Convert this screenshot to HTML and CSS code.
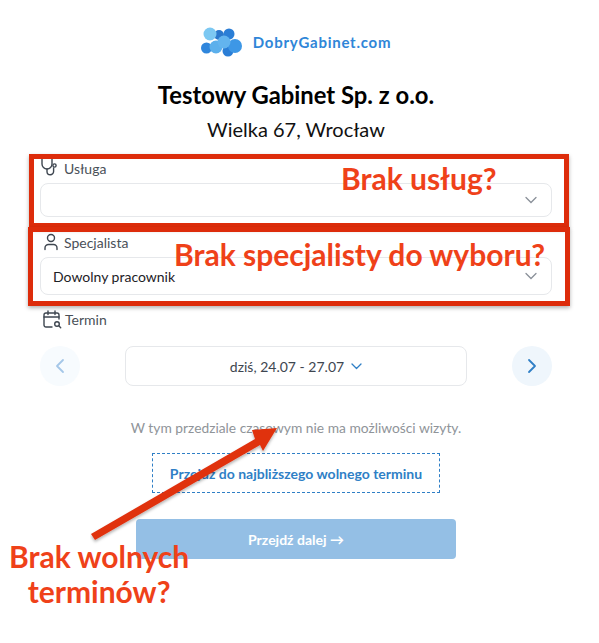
FILE: index.html
```html
<!DOCTYPE html>
<html lang="pl">
<head>
  <meta charset="UTF-8" />
  <title>DobryGabinet.com</title>
  <link rel="stylesheet" href="styles.css">
</head>
<body>
  <div class="page">

    <div class="logo">
      <svg class="logo-mark" width="41" height="30" viewBox="0 0 41 30">
        <circle cx="18" cy="8" r="5" fill="#2b78cc"/>
        <circle cx="28" cy="7" r="5.500" fill="#2b7ed6"/>
        <circle cx="9" cy="7" r="6.500" fill="#7cc8f2"/>
        <circle cx="5.500" cy="21" r="5.500" fill="#2f86dc"/>
        <circle cx="27" cy="24" r="5.500" fill="#2b7ed6"/>
        <circle cx="34" cy="19" r="7" fill="#3d97e6"/>
        <circle cx="15" cy="20" r="6.500" fill="#5cb0ec"/>
        <circle cx="23" cy="15" r="6.500" fill="#63b4ee"/>
      </svg>
      <span class="logo-text">DobryGabinet.com</span>
    </div>

    <h1>Testowy Gabinet Sp. z o.o.</h1>
    <p class="address">Wielka 67, Wrocław</p>

    <div class="field field-service">
      <div class="field-label">
        <svg class="icon-stetho" width="20" height="20" viewBox="0 0 20 20" fill="none" stroke="#3e4650" stroke-width="1.400" stroke-linecap="round">
          <path d="M2 0v6a5 5 0 0 0 10 0V0"/>
          <path d="M7 11v2.500a3.300 3.300 0 0 0 6.600 0v-3.500"/>
          <circle cx="14.500" cy="7.500" r="1.600"/>
        </svg>
        <span>Usługa</span>
      </div>
      <div class="select select-empty">
        <span></span>
        <svg class="chevron" width="12" height="8" viewBox="0 0 12 8" fill="none" stroke="#8a9099" stroke-width="1.300" stroke-linecap="round"><path d="M1 1.500l5 5 5-5"/></svg>
      </div>
    </div>

    <div class="field field-person">
      <div class="field-label">
        <svg width="16" height="18" viewBox="0 0 16 18" fill="none" stroke="#3e4650" stroke-width="1.400" stroke-linecap="round">
          <circle cx="8" cy="5" r="3.500"/>
          <path d="M2 16.500v-1.500a3.500 3.500 0 0 1 3.500-3.500h5a3.500 3.500 0 0 1 3.500 3.500v1.500"/>
        </svg>
        <span>Specjalista</span>
      </div>
      <div class="select">
        <span>Dowolny pracownik</span>
        <svg class="chevron" width="12" height="8" viewBox="0 0 12 8" fill="none" stroke="#8a9099" stroke-width="1.300" stroke-linecap="round"><path d="M1 1.500l5 5 5-5"/></svg>
      </div>
    </div>

    <div class="field-label term-label">
      <svg width="19" height="19" viewBox="0 0 19 19" fill="none" stroke="#3e4650" stroke-width="1.400" stroke-linecap="round">
        <path d="M9 17H3a2 2 0 0 1-2-2V5a2 2 0 0 1 2-2h11a2 2 0 0 1 2 2v4"/>
        <path d="M1 7h15M5 1v3.500M12 1v3.500"/>
        <circle cx="14" cy="14" r="2.300"/>
        <path d="M15.800 15.800l1.900 1.900"/>
      </svg>
      <span>Termin</span>
    </div>

    <div class="date-row">
      <button class="round-btn round-btn-off">
        <svg width="10" height="16" viewBox="0 0 10 16" fill="none" stroke="#a5c7e8" stroke-width="1.800" stroke-linecap="round" stroke-linejoin="round"><path d="M8 2L2 8l6 6"/></svg>
      </button>
      <div class="date-box">
        <span>dziś, 24.07 - 27.07</span>
        <svg width="11" height="7" viewBox="0 0 11 7" fill="none" stroke="#2f7fc6" stroke-width="1.300" stroke-linecap="round" stroke-linejoin="round"><path d="M1 1l4.500 4.500L10 1"/></svg>
      </div>
      <button class="round-btn">
        <svg width="10" height="16" viewBox="0 0 10 16" fill="none" stroke="#2f7fc6" stroke-width="1.800" stroke-linecap="round" stroke-linejoin="round"><path d="M2 2l6 6-6 6"/></svg>
      </button>
    </div>

    <p class="no-slots">W tym przedziale czasowym nie ma możliwości wizyty.</p>

    <a class="next-free">Przejdź do najbliższego wolnego terminu</a>

    <button class="next-btn">Przejdź dalej →</button>

    <!-- adnotacje na zrzucie -->
    <div class="mark mark-service"></div>
    <div class="mark mark-person"></div>
    <div class="note note-service">Brak usług?</div>
    <div class="note note-person">Brak specjalisty do wyboru?</div>
    <svg class="arrow" width="200" height="130" viewBox="0 0 200 130">
      <defs>
        <filter id="arrowShadow" x="-10%" y="-10%" width="120%" height="130%">
          <feDropShadow dx="0" dy="2" stdDeviation="1.500" flood-color="#000" flood-opacity="0.3"/>
        </filter>
      </defs>
      <path d="M1 119L165 24 162 15 187 13 173 36 170 30 5 125z" fill="#e0300f" filter="url(#arrowShadow)"/>
    </svg>
    <div class="note note-slots">Brak wolnych<br>terminów?</div>

  </div>
</body>
</html>
```

FILE: styles.css
```css
* {
  box-sizing: border-box;
}

body {
  margin: 0;
  background: #ffffff;
  font-family: Lato, sans-serif;
  color: #3e4650;
}

.page {
  position: relative;
  width: 599px;
  height: 643px;
  overflow: hidden;
  padding: 27px 47px 0 40px;
  display: flex;
  flex-direction: column;
}

.logo {
  display: flex;
  justify-content: center;
  align-items: center;
  gap: 11px;
  height: 30px;
}

.logo-text {
  font-size: 15px;
  font-weight: 700;
  letter-spacing: 0.75px;
  color: #2f86d8;
}

h1 {
  margin: 23px 0 0;
  font-size: 23.800px;
  line-height: 30px;
  font-weight: 700;
  text-align: center;
  color: #000000;
}

.address {
  margin: 7px 0 0;
  font-size: 20px;
  line-height: 24px;
  text-align: center;
  color: #111111;
}

.field {
  display: flex;
  flex-direction: column;
}

.field-service {
  margin-top: 17px;
}

.field-person {
  margin-top: 15px;
}

.field-label {
  display: flex;
  align-items: center;
  gap: 4px;
  height: 20px;
  font-size: 14px;
  color: #4a5058;
}

.field-service .select {
  height: 34px;
  margin-top: 5px;
}

.field-person .select {
  height: 38px;
  margin-top: 5px;
}

.field-person .field-label {
  padding-left: 3px;
  gap: 5px;
}

.select {
  display: flex;
  justify-content: space-between;
  align-items: center;
  padding: 0 14px 0 12px;
  border: 1px solid #e6e8eb;
  border-radius: 8px;
  background: #ffffff;
  font-size: 14px;
  color: #1d2126;
}

.term-label {
  margin-top: 14px;
  padding-left: 3px;
  gap: 3px;
}

.date-row {
  display: flex;
  justify-content: space-between;
  align-items: center;
  margin-top: 17px;
  height: 40px;
}

.round-btn {
  display: flex;
  justify-content: center;
  align-items: center;
  width: 40px;
  height: 40px;
  padding: 0;
  border: none;
  border-radius: 50%;
  background: #eff6fc;
}

.round-btn-off {
  background: #f7fbfe;
}

.date-box {
  display: flex;
  justify-content: center;
  align-items: center;
  gap: 7px;
  width: 342px;
  height: 40px;
  border: 1px solid #e6e8eb;
  border-radius: 8px;
  font-size: 14px;
  color: #3e4650;
}

.no-slots {
  margin: 33px 0 0;
  font-size: 13.800px;
  line-height: 17px;
  text-align: center;
  color: #8f9499;
}

.next-free {
  display: flex;
  justify-content: center;
  align-items: center;
  align-self: center;
  width: 288px;
  height: 40px;
  margin-top: 17px;
  border: 1px dashed #2f7fc6;
  font-size: 14px;
  font-weight: 700;
  color: #2f7fc6;
}

.next-btn {
  align-self: center;
  width: 320px;
  height: 40px;
  margin-top: 26px;
  border: none;
  border-radius: 4px;
  background: #94bfe5;
  font-family: Lato, sans-serif;
  font-size: 14px;
  font-weight: 700;
  color: #ffffff;
}

.mark {
  position: absolute;
  border: 5px solid #dd2c0b;
  box-shadow: 0 2px 4px rgba(0, 0, 0, 0.3);
}

.mark-service {
  left: 29px;
  top: 154px;
  width: 540px;
  height: 74px;
}

.mark-person {
  left: 28px;
  top: 227px;
  width: 542px;
  height: 79px;
}

.note {
  position: absolute;
  font-size: 30px;
  line-height: 35px;
  font-weight: 700;
  color: #ef4119;
  white-space: nowrap;
}

.note-service {
  left: 341px;
  top: 161px;
}

.note-person {
  left: 174px;
  top: 237px;
}

.note-slots {
  left: 9px;
  top: 539px;
  text-align: center;
}

.arrow {
  position: absolute;
  left: 90px;
  top: 415px;
}
```
